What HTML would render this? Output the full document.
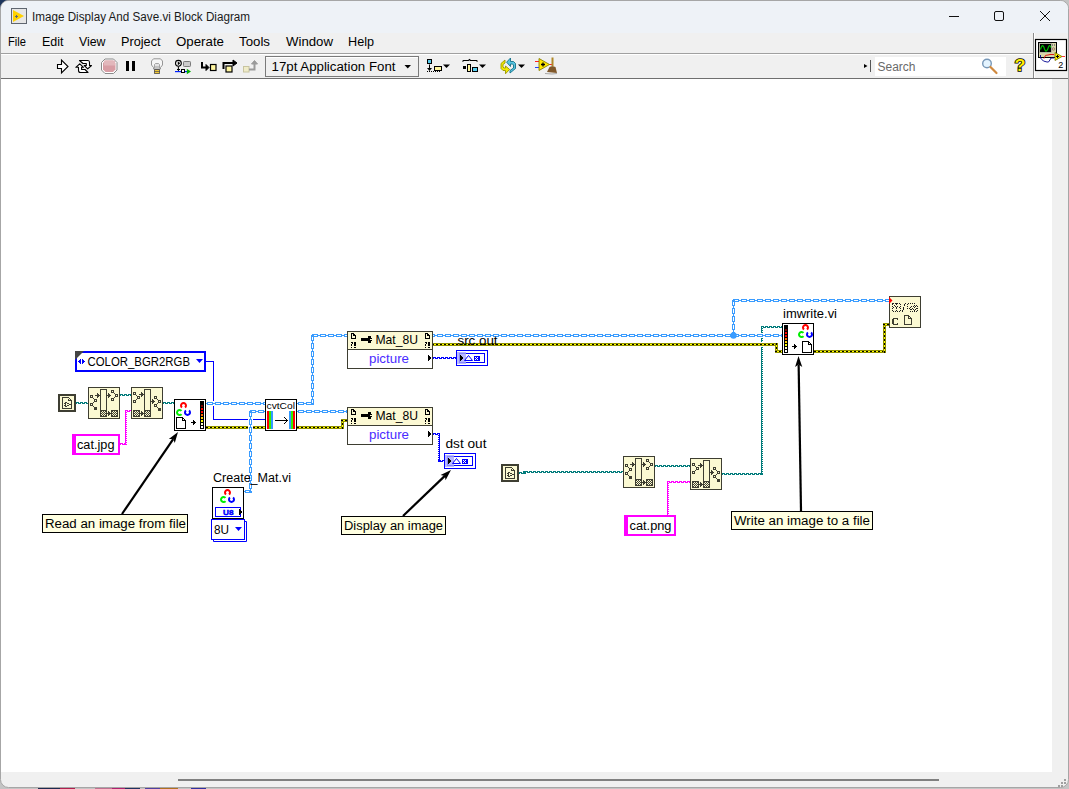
<!DOCTYPE html>
<html><head><meta charset="utf-8"><style>
html,body{margin:0;padding:0;width:1069px;height:789px;overflow:hidden;background:#c4c4c4}
svg{display:block;position:absolute;left:0;top:0}
text{font-family:"Liberation Sans",sans-serif}
</style></head><body>
<svg width="1069" height="789" viewBox="0 0 1069 789">
<defs>
<pattern id="chH" width="8" height="3" patternUnits="userSpaceOnUse"><path d="M1,0h6v1h-6zM1,2h6v1h-6zM0,1h2v1h-2zM6,1h2v1h-2z" fill="#3a9cff"/></pattern>
<pattern id="chV" width="3" height="8" patternUnits="userSpaceOnUse"><path d="M0,1v6h1v-6zM2,1v6h1v-6zM1,0v2h1v-2zM1,6v2h1v-2z" fill="#3a9cff"/></pattern>
<pattern id="erH" width="4" height="3" patternUnits="userSpaceOnUse"><rect width="4" height="3" fill="#8f8f00"/><rect x="0" y="1" width="2" height="1" fill="#000"/><rect x="2" y="1" width="2" height="1" fill="#ffff00"/></pattern>
<pattern id="erV" width="3" height="4" patternUnits="userSpaceOnUse"><rect width="3" height="4" fill="#8f8f00"/><rect y="0" x="1" height="2" width="1" fill="#000"/><rect y="2" x="1" height="2" width="1" fill="#ffff00"/></pattern>
<pattern id="tlH" width="4" height="2" patternUnits="userSpaceOnUse"><path d="M0,0h3v1h-3zM2,1h2v1h-2zM0,1h1v1h-1z" fill="#007b7b"/></pattern>
<pattern id="tlVL" width="2" height="2" patternUnits="userSpaceOnUse"><path d="M0,0h1v2h-1zM1,0h1v1h-1z" fill="#007b7b"/></pattern>
<pattern id="tlVR" width="2" height="2" patternUnits="userSpaceOnUse"><path d="M1,0h1v2h-1zM0,0h1v1h-1z" fill="#007b7b"/></pattern>
<pattern id="pkH" width="4" height="2" patternUnits="userSpaceOnUse"><path d="M0,0h3v1h-3zM2,1h2v1h-2zM0,1h1v1h-1z" fill="#ff00ff"/></pattern>
<pattern id="pkVL" width="2" height="2" patternUnits="userSpaceOnUse"><path d="M0,0h1v2h-1zM1,0h1v1h-1z" fill="#ff00ff"/></pattern>
<pattern id="pkVR" width="2" height="2" patternUnits="userSpaceOnUse"><path d="M1,0h1v2h-1zM0,0h1v1h-1z" fill="#ff00ff"/></pattern>
<pattern id="blH" width="4" height="2" patternUnits="userSpaceOnUse"><path d="M0,0h3v1h-3zM2,1h2v1h-2zM0,1h1v1h-1z" fill="#0000ff"/></pattern>
<pattern id="blVL" width="2" height="2" patternUnits="userSpaceOnUse"><path d="M0,0h1v2h-1zM1,0h1v1h-1z" fill="#0000ff"/></pattern>
<pattern id="blVR" width="2" height="2" patternUnits="userSpaceOnUse"><path d="M1,0h1v2h-1zM0,0h1v1h-1z" fill="#0000ff"/></pattern>
<symbol id="subvi" viewBox="0 0 32 32" width="32" height="32"><rect width="32" height="32" fill="#fbf9d2"/><path d="M0,0h32v1h-32zM0,1h1v1h-1zM31,1h1v1h-1zM0,2h1v1h-1zM12,2h7v1h-7zM31,2h1v1h-1zM0,3h1v1h-1zM12,3h1v1h-1zM18,3h1v1h-1zM23,3h3v1h-3zM31,3h1v1h-1zM0,4h1v1h-1zM12,4h1v1h-1zM18,4h1v1h-1zM23,4h1v1h-1zM25,4h1v1h-1zM31,4h1v1h-1zM0,5h1v1h-1zM12,5h1v1h-1zM18,5h1v1h-1zM23,5h3v1h-3zM31,5h1v1h-1zM0,6h1v1h-1zM9,6h1v1h-1zM12,6h1v1h-1zM18,6h1v1h-1zM20,6h1v1h-1zM26,6h1v1h-1zM31,6h1v1h-1zM0,7h1v1h-1zM9,7h2v1h-2zM12,7h1v1h-1zM18,7h1v1h-1zM20,7h2v1h-2zM27,7h3v1h-3zM31,7h1v1h-1zM0,8h1v1h-1zM2,8h3v1h-3zM7,8h6v1h-6zM18,8h5v1h-5zM27,8h1v1h-1zM29,8h1v1h-1zM31,8h1v1h-1zM0,9h1v1h-1zM2,9h1v1h-1zM4,9h1v1h-1zM9,9h2v1h-2zM12,9h1v1h-1zM18,9h1v1h-1zM20,9h2v1h-2zM27,9h3v1h-3zM31,9h1v1h-1zM0,10h1v1h-1zM2,10h3v1h-3zM9,10h1v1h-1zM12,10h1v1h-1zM18,10h1v1h-1zM20,10h1v1h-1zM26,10h1v1h-1zM31,10h1v1h-1zM0,11h1v1h-1zM5,11h1v1h-1zM12,11h1v1h-1zM18,11h1v1h-1zM23,11h3v1h-3zM31,11h1v1h-1zM0,12h1v1h-1zM6,12h3v1h-3zM12,12h1v1h-1zM18,12h1v1h-1zM23,12h1v1h-1zM25,12h1v1h-1zM31,12h1v1h-1zM0,13h1v1h-1zM6,13h1v1h-1zM8,13h1v1h-1zM12,13h1v1h-1zM18,13h1v1h-1zM23,13h3v1h-3zM31,13h1v1h-1zM0,14h1v1h-1zM6,14h3v1h-3zM12,14h1v1h-1zM18,14h1v1h-1zM31,14h1v1h-1zM0,15h1v1h-1zM5,15h1v1h-1zM12,15h1v1h-1zM18,15h1v1h-1zM31,15h1v1h-1zM0,16h1v1h-1zM2,16h3v1h-3zM12,16h1v1h-1zM18,16h1v1h-1zM31,16h1v1h-1zM0,17h1v1h-1zM2,17h1v1h-1zM4,17h1v1h-1zM12,17h1v1h-1zM18,17h1v1h-1zM31,17h1v1h-1zM0,18h1v1h-1zM2,18h3v1h-3zM12,18h1v1h-1zM18,18h1v1h-1zM31,18h1v1h-1zM0,19h1v1h-1zM5,19h1v1h-1zM12,19h1v1h-1zM18,19h1v1h-1zM31,19h1v1h-1zM0,20h1v1h-1zM6,20h3v1h-3zM12,20h1v1h-1zM18,20h1v1h-1zM31,20h1v1h-1zM0,21h1v1h-1zM6,21h3v1h-3zM12,21h1v1h-1zM18,21h1v1h-1zM31,21h1v1h-1zM0,22h1v1h-1zM6,22h3v1h-3zM12,22h1v1h-1zM18,22h1v1h-1zM31,22h1v1h-1zM0,23h1v1h-1zM12,23h7v1h-7zM23,23h7v1h-7zM31,23h1v1h-1zM0,24h1v1h-1zM12,24h2v1h-2zM15,24h1v1h-1zM17,24h2v1h-2zM20,24h1v1h-1zM23,24h2v1h-2zM26,24h1v1h-1zM28,24h2v1h-2zM31,24h1v1h-1zM0,25h1v1h-1zM12,25h1v1h-1zM14,25h1v1h-1zM16,25h1v1h-1zM18,25h1v1h-1zM20,25h2v1h-2zM23,25h1v1h-1zM25,25h1v1h-1zM27,25h1v1h-1zM29,25h1v1h-1zM31,25h1v1h-1zM0,26h1v1h-1zM12,26h2v1h-2zM15,26h1v1h-1zM17,26h8v1h-8zM26,26h1v1h-1zM28,26h2v1h-2zM31,26h1v1h-1zM0,27h1v1h-1zM12,27h1v1h-1zM14,27h1v1h-1zM16,27h1v1h-1zM18,27h1v1h-1zM20,27h2v1h-2zM23,27h1v1h-1zM25,27h1v1h-1zM27,27h1v1h-1zM29,27h1v1h-1zM31,27h1v1h-1zM0,28h1v1h-1zM12,28h2v1h-2zM15,28h1v1h-1zM17,28h2v1h-2zM20,28h1v1h-1zM23,28h2v1h-2zM26,28h1v1h-1zM28,28h2v1h-2zM31,28h1v1h-1zM0,29h1v1h-1zM12,29h7v1h-7zM23,29h7v1h-7zM31,29h1v1h-1zM0,30h1v1h-1zM31,30h1v1h-1zM0,31h32v1h-32z" fill="#3e3e32"/></symbol>
<symbol id="subviB" viewBox="0 0 32 32" width="32" height="32"><rect width="32" height="32" fill="#fbf9d2"/><path d="M0,0h32v1h-32zM0,1h1v1h-1zM31,1h1v1h-1zM0,2h1v1h-1zM13,2h7v1h-7zM31,2h1v1h-1zM0,3h1v1h-1zM13,3h1v1h-1zM19,3h1v1h-1zM31,3h1v1h-1zM0,4h1v1h-1zM13,4h1v1h-1zM19,4h1v1h-1zM31,4h1v1h-1zM0,5h1v1h-1zM2,5h3v1h-3zM10,5h1v1h-1zM13,5h1v1h-1zM19,5h1v1h-1zM31,5h1v1h-1zM0,6h1v1h-1zM2,6h1v1h-1zM4,6h1v1h-1zM10,6h2v1h-2zM13,6h1v1h-1zM19,6h1v1h-1zM31,6h1v1h-1zM0,7h1v1h-1zM2,7h3v1h-3zM8,7h6v1h-6zM19,7h1v1h-1zM31,7h1v1h-1zM0,8h1v1h-1zM5,8h1v1h-1zM10,8h2v1h-2zM13,8h1v1h-1zM19,8h1v1h-1zM31,8h1v1h-1zM0,9h1v1h-1zM6,9h3v1h-3zM10,9h1v1h-1zM13,9h1v1h-1zM19,9h1v1h-1zM23,9h3v1h-3zM31,9h1v1h-1zM0,10h1v1h-1zM6,10h1v1h-1zM8,10h1v1h-1zM13,10h1v1h-1zM19,10h1v1h-1zM23,10h1v1h-1zM25,10h1v1h-1zM31,10h1v1h-1zM0,11h1v1h-1zM6,11h3v1h-3zM13,11h1v1h-1zM19,11h1v1h-1zM23,11h3v1h-3zM31,11h1v1h-1zM0,12h1v1h-1zM5,12h1v1h-1zM13,12h1v1h-1zM19,12h1v1h-1zM21,12h1v1h-1zM26,12h1v1h-1zM31,12h1v1h-1zM0,13h1v1h-1zM2,13h3v1h-3zM13,13h1v1h-1zM19,13h1v1h-1zM21,13h2v1h-2zM27,13h3v1h-3zM31,13h1v1h-1zM0,14h1v1h-1zM2,14h1v1h-1zM4,14h1v1h-1zM13,14h1v1h-1zM19,14h5v1h-5zM27,14h1v1h-1zM29,14h1v1h-1zM31,14h1v1h-1zM0,15h1v1h-1zM2,15h3v1h-3zM13,15h1v1h-1zM19,15h1v1h-1zM21,15h2v1h-2zM27,15h3v1h-3zM31,15h1v1h-1zM0,16h1v1h-1zM13,16h1v1h-1zM19,16h1v1h-1zM21,16h1v1h-1zM26,16h1v1h-1zM31,16h1v1h-1zM0,17h1v1h-1zM13,17h1v1h-1zM19,17h1v1h-1zM23,17h3v1h-3zM31,17h1v1h-1zM0,18h1v1h-1zM13,18h1v1h-1zM19,18h1v1h-1zM23,18h1v1h-1zM25,18h1v1h-1zM31,18h1v1h-1zM0,19h1v1h-1zM13,19h1v1h-1zM19,19h1v1h-1zM23,19h3v1h-3zM31,19h1v1h-1zM0,20h1v1h-1zM13,20h1v1h-1zM19,20h1v1h-1zM26,20h1v1h-1zM31,20h1v1h-1zM0,21h1v1h-1zM13,21h1v1h-1zM19,21h1v1h-1zM27,21h3v1h-3zM31,21h1v1h-1zM0,22h1v1h-1zM13,22h1v1h-1zM19,22h1v1h-1zM27,22h3v1h-3zM31,22h1v1h-1zM0,23h1v1h-1zM2,23h7v1h-7zM13,23h7v1h-7zM27,23h3v1h-3zM31,23h1v1h-1zM0,24h1v1h-1zM2,24h2v1h-2zM5,24h1v1h-1zM7,24h2v1h-2zM10,24h1v1h-1zM13,24h2v1h-2zM16,24h1v1h-1zM18,24h2v1h-2zM31,24h1v1h-1zM0,25h1v1h-1zM2,25h1v1h-1zM4,25h1v1h-1zM6,25h1v1h-1zM8,25h1v1h-1zM10,25h2v1h-2zM13,25h1v1h-1zM15,25h1v1h-1zM17,25h1v1h-1zM19,25h1v1h-1zM31,25h1v1h-1zM0,26h1v1h-1zM2,26h2v1h-2zM5,26h1v1h-1zM7,26h8v1h-8zM16,26h1v1h-1zM18,26h2v1h-2zM31,26h1v1h-1zM0,27h1v1h-1zM2,27h1v1h-1zM4,27h1v1h-1zM6,27h1v1h-1zM8,27h1v1h-1zM10,27h2v1h-2zM13,27h1v1h-1zM15,27h1v1h-1zM17,27h1v1h-1zM19,27h1v1h-1zM31,27h1v1h-1zM0,28h1v1h-1zM2,28h2v1h-2zM5,28h1v1h-1zM7,28h2v1h-2zM10,28h1v1h-1zM13,28h2v1h-2zM16,28h1v1h-1zM18,28h2v1h-2zM31,28h1v1h-1zM0,29h1v1h-1zM2,29h7v1h-7zM13,29h7v1h-7zM31,29h1v1h-1zM0,30h1v1h-1zM31,30h1v1h-1zM0,31h32v1h-32z" fill="#3e3e32"/></symbol>
<symbol id="pathconst" viewBox="0 0 18 18" width="18" height="18"><rect width="18" height="18" fill="#fbf9d2"/><path d="M0,0h18v1h-18zM0,1h18v1h-18zM0,2h2v1h-2zM16,2h2v1h-2zM0,3h2v1h-2zM4,3h7v1h-7zM16,3h2v1h-2zM0,4h2v1h-2zM4,4h1v1h-1zM11,4h1v1h-1zM16,4h2v1h-2zM0,5h2v1h-2zM4,5h1v1h-1zM10,5h1v1h-1zM12,5h1v1h-1zM16,5h2v1h-2zM0,6h2v1h-2zM4,6h1v1h-1zM10,6h4v1h-4zM16,6h2v1h-2zM0,7h2v1h-2zM4,7h1v1h-1zM13,7h1v1h-1zM16,7h2v1h-2zM0,8h2v1h-2zM4,8h1v1h-1zM7,8h2v1h-2zM13,8h1v1h-1zM16,8h2v1h-2zM0,9h2v1h-2zM4,9h1v1h-1zM6,9h2v1h-2zM9,9h2v1h-2zM13,9h1v1h-1zM16,9h2v1h-2zM0,10h2v1h-2zM4,10h1v1h-1zM7,10h1v1h-1zM11,10h3v1h-3zM16,10h2v1h-2zM0,11h2v1h-2zM4,11h1v1h-1zM6,11h2v1h-2zM9,11h2v1h-2zM13,11h1v1h-1zM16,11h2v1h-2zM0,12h2v1h-2zM4,12h1v1h-1zM7,12h2v1h-2zM13,12h1v1h-1zM16,12h2v1h-2zM0,13h2v1h-2zM4,13h1v1h-1zM13,13h1v1h-1zM16,13h2v1h-2zM0,14h2v1h-2zM4,14h10v1h-10zM16,14h2v1h-2zM0,15h2v1h-2zM16,15h2v1h-2zM0,16h18v1h-18zM0,17h18v1h-18z" fill="#3e3e32"/></symbol>
<symbol id="imread" viewBox="0 0 32 32" width="32" height="32"><rect width="32" height="32" fill="#000"/><rect x="1" y="1" width="30" height="30" fill="#fff"/><path d="M7.96,8.47 A2.5,2.5 0 1 1 11.04,8.47" fill="none" stroke="#ff0000" stroke-width="2"/><path d="M7.47,15.04 A2.5,2.5 0 1 1 7.47,11.96" fill="none" stroke="#00ee00" stroke-width="2"/><path d="M15.04,11.53 A2.5,2.5 0 1 1 11.96,11.53" fill="none" stroke="#0000ff" stroke-width="2"/><path d="M2,18h7v1h-7zM2,19h1v1h-1zM8,19h2v1h-2zM2,20h1v1h-1zM8,20h1v1h-1zM10,20h1v1h-1zM2,21h1v1h-1zM8,21h4v1h-4zM2,22h1v1h-1zM11,22h1v1h-1zM2,23h1v1h-1zM11,23h1v1h-1zM2,24h1v1h-1zM11,24h1v1h-1zM2,25h1v1h-1zM11,25h1v1h-1zM2,26h1v1h-1zM11,26h1v1h-1zM2,27h1v1h-1zM11,27h1v1h-1zM2,28h1v1h-1zM11,28h1v1h-1zM2,29h10v1h-10z" fill="#000"/><path d="M19,21h1v1h-1zM19,22h2v1h-2zM17,23h5v1h-5zM19,24h2v1h-2zM19,25h1v1h-1z" fill="#000"/><rect x="26" y="2" width="4" height="28" fill="#000"/><rect x="27" y="6" width="2" height="2" fill="#7a0000"/><rect x="27" y="9" width="2" height="2" fill="#ff0000"/><rect x="27" y="12" width="2" height="2" fill="#ff0000"/><rect x="27" y="15" width="2" height="2" fill="#ff6a00"/><rect x="27" y="18" width="2" height="2" fill="#ffd000"/><rect x="27" y="21" width="2" height="2" fill="#ffff00"/><rect x="27" y="24" width="2" height="2" fill="#ffffc8"/><rect x="27" y="27" width="2" height="2" fill="#ffffff"/></symbol>
<symbol id="imwrite" viewBox="0 0 32 32" width="32" height="32"><rect width="32" height="32" fill="#000"/><rect x="1" y="1" width="30" height="30" fill="#fff"/><path d="M21.96,6.47 A2.5,2.5 0 1 1 25.04,6.47" fill="none" stroke="#ff0000" stroke-width="2"/><path d="M21.47,13.04 A2.5,2.5 0 1 1 21.47,9.96" fill="none" stroke="#00ee00" stroke-width="2"/><path d="M29.04,9.53 A2.5,2.5 0 1 1 25.96,9.53" fill="none" stroke="#0000ff" stroke-width="2"/><path d="M20,18h7v1h-7zM20,19h1v1h-1zM26,19h2v1h-2zM20,20h1v1h-1zM26,20h1v1h-1zM28,20h1v1h-1zM20,21h1v1h-1zM26,21h4v1h-4zM20,22h1v1h-1zM29,22h1v1h-1zM20,23h1v1h-1zM29,23h1v1h-1zM20,24h1v1h-1zM29,24h1v1h-1zM20,25h1v1h-1zM29,25h1v1h-1zM20,26h1v1h-1zM29,26h1v1h-1zM20,27h1v1h-1zM29,27h1v1h-1zM20,28h1v1h-1zM29,28h1v1h-1zM20,29h10v1h-10z" fill="#000"/><path d="M12,21h1v1h-1zM12,22h2v1h-2zM10,23h5v1h-5zM12,24h2v1h-2zM12,25h1v1h-1z" fill="#000"/><rect x="2" y="2" width="4" height="28" fill="#000"/><rect x="3" y="6" width="2" height="2" fill="#7a0000"/><rect x="3" y="9" width="2" height="2" fill="#ff0000"/><rect x="3" y="12" width="2" height="2" fill="#ff0000"/><rect x="3" y="15" width="2" height="2" fill="#ff6a00"/><rect x="3" y="18" width="2" height="2" fill="#ffd000"/><rect x="3" y="21" width="2" height="2" fill="#ffff00"/><rect x="3" y="24" width="2" height="2" fill="#ffffc8"/><rect x="3" y="27" width="2" height="2" fill="#ffffff"/></symbol>
<symbol id="cvtcolor" viewBox="0 0 32 32" width="32" height="32"><rect width="32" height="32" fill="#000"/><rect x="1" y="1" width="30" height="30" fill="#fff"/><text x="1.5" y="9.6" font-family="Liberation Mono" font-size="9" fill="#000" textLength="28.5" lengthAdjust="spacingAndGlyphs">cvtCol</text><rect x="2" y="12" width="2" height="18" fill="#ff0000"/><rect x="4" y="12" width="2" height="18" fill="#33ee00"/><rect x="6" y="12" width="2" height="18" fill="#3399ff"/><rect x="24" y="12" width="2" height="18" fill="#3399ff"/><rect x="26" y="12" width="2" height="18" fill="#33ee00"/><rect x="28" y="12" width="2" height="18" fill="#ff0000"/><path d="M10,21h12v1h-12zM19,18h1v1h-1zM20,19h1v1h-1zM21,20h1v1h-1zM22,21h1v1h-1zM21,22h1v1h-1zM20,23h1v1h-1zM19,24h1v1h-1z" fill="#000"/></symbol>
<symbol id="createmat" viewBox="0 0 32 32" width="32" height="32"><rect width="32" height="32" fill="#000"/><rect x="1" y="1" width="30" height="30" fill="#fff"/><path d="M13.96,7.47 A2.5,2.5 0 1 1 17.04,7.47" fill="none" stroke="#ff0000" stroke-width="2"/><path d="M13.47,14.04 A2.5,2.5 0 1 1 13.47,10.96" fill="none" stroke="#00ee00" stroke-width="2"/><path d="M21.04,10.53 A2.5,2.5 0 1 1 17.96,10.53" fill="none" stroke="#0000ff" stroke-width="2"/><rect x="3.5" y="20.5" width="25" height="9" fill="#fff" stroke="#0000ff"/><text x="11" y="28" font-family="Liberation Sans" font-weight="bold" font-size="8" fill="#0000ff" stroke="#0000ff" stroke-width="0.5" textLength="10.5" lengthAdjust="spacingAndGlyphs">U8</text><path d="M27,22h1v1h1v1h1v2h-1v1h-1v1h-1z" fill="#000"/></symbol>
<symbol id="errh" viewBox="0 0 32 32" width="32" height="32"><rect width="32" height="32" fill="#3e3e32"/><rect x="1" y="1" width="30" height="30" fill="#fbf9d2"/><path d="M3,7h2v1h-2zM6,7h3v1h-3zM10,7h1v1h-1zM16,7h1v1h-1zM19,7h1v1h-1zM21,7h1v1h-1zM23,7h1v1h-1zM25,7h1v1h-1zM3,8h1v1h-1zM7,8h1v1h-1zM11,8h1v1h-1zM15,8h1v1h-1zM18,8h1v1h-1zM5,9h1v1h-1zM15,9h1v1h-1zM25,9h1v1h-1zM27,9h1v1h-1zM3,10h1v1h-1zM6,10h1v1h-1zM8,10h1v1h-1zM11,10h1v1h-1zM18,10h1v1h-1zM22,10h1v1h-1zM24,10h1v1h-1zM26,10h1v1h-1zM28,10h1v1h-1zM4,11h1v1h-1zM7,11h1v1h-1zM10,11h1v1h-1zM14,11h1v1h-1zM21,11h1v1h-1zM25,11h1v1h-1zM3,12h1v1h-1zM7,12h1v1h-1zM11,12h1v1h-1zM14,12h1v1h-1zM18,12h1v1h-1zM20,12h1v1h-1zM23,12h1v1h-1zM27,12h2v1h-2zM14,13h1v1h-1zM21,13h2v1h-2zM24,13h1v1h-1zM26,13h1v1h-1zM3,14h1v1h-1zM7,14h1v1h-1zM11,14h1v1h-1zM13,14h1v1h-1zM25,14h1v1h-1zM28,14h1v1h-1zM4,15h1v1h-1zM6,15h1v1h-1zM8,15h1v1h-1zM10,15h1v1h-1zM13,15h1v1h-1zM21,15h1v1h-1zM23,15h1v1h-1zM25,15h1v1h-1zM27,15h1v1h-1z" fill="#202020"/><path d="M4,22h5v1h-5zM3,23h2v1h-2zM8,23h1v1h-1zM3,24h2v1h-2zM3,25h2v1h-2zM3,26h2v1h-2zM3,27h2v1h-2zM8,27h1v1h-1zM4,28h5v1h-5z" fill="#3e3e32"/><path d="M15,19h5v1h-5zM15,20h1v1h-1zM19,20h2v1h-2zM15,21h1v1h-1zM19,21h1v1h-1zM21,21h1v1h-1zM15,22h1v1h-1zM19,22h4v1h-4zM15,23h1v1h-1zM22,23h1v1h-1zM15,24h1v1h-1zM22,24h1v1h-1zM15,25h1v1h-1zM22,25h1v1h-1zM15,26h1v1h-1zM22,26h1v1h-1zM15,27h1v1h-1zM22,27h1v1h-1zM15,28h8v1h-8z" fill="#3e3e32"/></symbol>
<symbol id="propnode" viewBox="0 0 86 38" width="86" height="38">
<rect width="86" height="38" fill="#3e3e32"/><rect x="1" y="1" width="84" height="17" fill="#fcf9d4"/><rect x="1" y="19" width="84" height="18" fill="#fff"/>
<path d="M4,2h3v1h-3zM4,3h1v1h-1zM6,3h2v1h-2zM4,4h1v1h-1zM6,4h3v1h-3zM4,5h1v1h-1zM8,5h1v1h-1zM4,6h1v1h-1zM8,6h1v1h-1zM4,7h5v1h-5zM4,11h2v1h-2zM7,11h2v1h-2zM5,12h1v1h-1zM7,12h2v1h-2zM4,13h1v1h-1zM7,13h2v1h-2zM4,14h1v1h-1zM7,14h2v1h-2zM4,16h1v1h-1zM7,16h2v1h-2z" fill="#000"/><path d="M78,2h3v1h-3zM78,3h1v1h-1zM80,3h2v1h-2zM78,4h1v1h-1zM80,4h3v1h-3zM78,5h1v1h-1zM82,5h1v1h-1zM78,6h1v1h-1zM82,6h1v1h-1zM78,7h5v1h-5zM78,11h2v1h-2zM81,11h2v1h-2zM79,12h1v1h-1zM81,12h2v1h-2zM78,13h1v1h-1zM81,13h2v1h-2zM78,14h1v1h-1zM81,14h2v1h-2zM78,16h1v1h-1zM81,16h2v1h-2z" fill="#000"/><path d="M21,5h3v1h-3zM21,6h3v1h-3zM14,7h8v1h-8zM24,7h1v1h-1zM14,8h8v1h-8zM14,9h8v1h-8zM24,9h1v1h-1zM21,10h3v1h-3zM21,11h3v1h-3z" fill="#000"/>
<path d="M22,7h2v1h-1v1h1v1h-2z" fill="#000"/>
<path d="M81,24h1v1h1v1h1v2h-1v1h-1v1h-1z" fill="#000"/>
<text x="28.5" y="13.2" font-size="12.6" fill="#000" textLength="42.5" lengthAdjust="spacingAndGlyphs">Mat_8U</text>
<text x="22" y="31.5" font-size="12.6" fill="#4a2cff" textLength="40" lengthAdjust="spacingAndGlyphs">picture</text>
</symbol>
<symbol id="picind" viewBox="0 0 32 16" width="32" height="16">
<rect x="0.5" y="0.5" width="31" height="15" fill="#fff" stroke="#0000ff"/>
<rect x="3.5" y="3.5" width="25" height="9" fill="none" stroke="#0000ff"/>
<rect x="1" y="2" width="9" height="12" fill="#a8a8ff" opacity="0.8"/>
<path d="M4,5h1v1h1v1h1v2h-1v1h-1v1h-1z" fill="#000"/>
<path d="M8.5,10.5 L12.5,5.5 L16.5,10.5 Z" fill="none" stroke="#0000ff"/>
<rect x="18" y="6" width="6" height="5" fill="#0000ff"/>
<path d="M19,7h1v1h-1zM21,7h1v1h-1zM20,8h1v1h-1zM19,9h1v1h-1zM21,9h1v1h-1z" fill="#fff"/>
</symbol>
</defs>
<defs></defs>
<rect x="0" y="0" width="1069" height="789" fill="#c4c4c4"/>
<rect x="0" y="0" width="191" height="4" fill="#1d355c"/>
<rect x="0" y="0" width="4" height="40" fill="#1d355c"/>
<rect x="209" y="0" width="15" height="2" fill="#d9a520"/>
<rect x="38" y="786" width="22" height="3" fill="#1d2a50"/><rect x="60" y="786" width="15" height="3" fill="#b02050"/><rect x="95" y="786" width="17" height="3" fill="#c07090"/><rect x="112" y="786" width="13" height="3" fill="#b02070"/><rect x="125" y="786" width="15" height="3" fill="#203060"/><rect x="145" y="786" width="15" height="3" fill="#5040a0"/><rect x="160" y="786" width="18" height="3" fill="#b07020"/><rect x="191" y="786" width="15" height="3" fill="#3030a0"/>
<rect x="0.5" y="0.5" width="1068" height="787" rx="8" fill="#f0f0f0" stroke="#a6a6a6"/>
<path d="M1,33 V9 A8,8 0 0 1 9,1 H1060 A8,8 0 0 1 1068,9 V33 Z" fill="#eef2f7"/>
<rect x="1" y="53" width="1032" height="1" fill="#a0a0a0"/>
<rect x="1" y="54" width="1032" height="1" fill="#ffffff"/>
<rect x="1" y="78" width="1067" height="1" fill="#6f6f6f"/>
<rect x="1033" y="33" width="1" height="45" fill="#8a8a8a"/><rect x="1034" y="33" width="1" height="45" fill="#ffffff"/>
<rect x="1" y="79" width="1051" height="693" fill="#ffffff"/>
<rect x="178" y="779" width="761" height="2" fill="#808080"/>
<text x="32" y="21" font-size="12.5" fill="#1a1a1a" textLength="218" lengthAdjust="spacingAndGlyphs">Image Display And Save.vi Block Diagram</text>
<g font-size="12.5" fill="#000">
<text x="8" y="46" textLength="18" lengthAdjust="spacingAndGlyphs">File</text>
<text x="42" y="46" textLength="21.5" lengthAdjust="spacingAndGlyphs">Edit</text>
<text x="79" y="46" textLength="26.5" lengthAdjust="spacingAndGlyphs">View</text>
<text x="121" y="46" textLength="39.5" lengthAdjust="spacingAndGlyphs">Project</text>
<text x="176" y="46" textLength="48" lengthAdjust="spacingAndGlyphs">Operate</text>
<text x="239" y="46" textLength="31" lengthAdjust="spacingAndGlyphs">Tools</text>
<text x="286" y="46" textLength="47" lengthAdjust="spacingAndGlyphs">Window</text>
<text x="348" y="46" textLength="26" lengthAdjust="spacingAndGlyphs">Help</text>
</g>
<!-- title icon -->
<rect x="11.5" y="8.5" width="15" height="15" fill="#e6e6e6" stroke="#5f6670"/>
<path d="M13,10 L24,16 L13,22 Z" fill="#ffd200"/>
<path d="M15,16.5 h3 M16.5,15 v3" stroke="#5f6670" stroke-width="1"/>
<!-- window buttons -->
<rect x="949" y="16" width="10" height="1" fill="#111"/>
<rect x="994.5" y="11.5" width="9" height="9" rx="1.5" fill="none" stroke="#111" stroke-width="1"/>
<path d="M1040,11 L1050,21 M1050,11 L1040,21" stroke="#111" stroke-width="1"/>
<!-- toolbar -->
<path d="M57.5,64.5 H61.5 V60 L68,66.5 L61.5,73 V68.5 H57.5 Z" fill="#fff" stroke="#000" stroke-width="1.1"/>
<g fill="#fff" stroke="#000" stroke-width="1.1" stroke-linejoin="round">
<path d="M79.5,60.5 H88 Q89.5,60.5 89.5,62.5 V65.5 H91.5 L87.7,68.8 L84.3,65.5 H86.3 V63.5 H83 Z"/>
<path d="M88,72.5 H80.5 Q78.5,72.5 78.5,70.5 V67.3 H75.8 L79.7,63.8 L83.5,67.3 H81.6 V69.5 H85 Z"/>
</g>
<path d="M105,59 H113.5 L117,62.5 V70 L113.5,73.5 H105 L101.5,70 V62.5 Z" fill="#fff" stroke="#8a8a8a" stroke-width="1"/>
<path d="M105.5,60.5 H113 L115.5,63 V69.5 L113,72 H105.5 L103,69.5 V63 Z" fill="#d89da4"/>
<rect x="104" y="60.5" width="11" height="5" fill="#e2b7bb"/>
<rect x="126" y="61" width="3" height="10" fill="#000"/><rect x="132" y="61" width="3" height="10" fill="#000"/>
<path d="M153.5,69 V67.5 L151.5,65 V61 L153.5,58.8 H160.5 L162.5,61 V65 L160.5,67.5 V69 Z" fill="#f6f6f6" stroke="#8c8c8c" stroke-width="0.9"/>
<path d="M154.5,68.5 V64.5 L155.5,63.5 H158.5 L159.5,64.5 V68.5 M156,66 v2.5 M158,66 v2.5" fill="#e4e4e4" stroke="#909090" stroke-width="0.8"/>
<rect x="154" y="69" width="6" height="5" rx="0.8" fill="#505058"/>
<rect x="154.8" y="69.9" width="4.4" height="1.3" fill="#f0c838"/>
<rect x="154.8" y="71.9" width="4.4" height="1.3" fill="#f0c838"/>
<!-- retain wire values -->
<circle cx="178.4" cy="63.3" r="2.9" fill="#fff" stroke="#000" stroke-width="1.1"/>
<path d="M178,61.8 L180,63.3 L178,64.8 Z" fill="#000" stroke="#000" stroke-width="0.5"/>
<rect x="183.5" y="61.5" width="7" height="5" rx="0.8" fill="#cccccc" stroke="#7a7a7a"/>
<path d="M178.4,66.5 V71 M177,69.5 h3" stroke="#000" stroke-width="1"/>
<rect x="175" y="71" width="12" height="1.2" fill="#0020ff"/>
<rect x="181.5" y="69.5" width="3" height="3" fill="#fff" stroke="#000" stroke-width="1"/>
<path d="M186.8,68.8 L191,71.5 L186.8,74.2 Z" fill="#00b000"/>
<!-- step into -->
<path d="M202,62 V67.5 H207" fill="none" stroke="#000" stroke-width="2"/>
<path d="M206,64.5 L209,67.5 L206,70.5 Z" fill="#000" stroke="#000"/>
<rect x="210.5" y="64.5" width="5.5" height="6" fill="#fff6a0" stroke="#000" stroke-width="1.2"/>
<!-- step over -->
<path d="M223.5,69 V63 H234" fill="none" stroke="#000" stroke-width="2"/>
<path d="M233,60 L237,63 L233,66 Z" fill="#000" stroke="#000"/>
<rect x="226" y="66" width="6" height="6" fill="#fff6a0" stroke="#000" stroke-width="1.2"/>
<!-- step out disabled -->
<rect x="243.5" y="66.5" width="5.5" height="5.5" fill="#f0ecc8" stroke="#c8c4a0"/>
<path d="M249,69.5 H254.5 V63" fill="none" stroke="#9a9a9a" stroke-width="2"/>
<path d="M251.5,64 L254.5,60.5 L257.5,64 Z" fill="#9a9a9a" stroke="#9a9a9a"/>
<!-- font box -->
<rect x="265.5" y="56.5" width="153" height="20" fill="#f0f0f0" stroke="#7a7a7a"/>
<rect x="266" y="57" width="152" height="1" fill="#fff"/>
<text x="271.5" y="71" font-size="12.5" fill="#000" textLength="124" lengthAdjust="spacingAndGlyphs">17pt Application Font</text>
<path d="M404.5,65 H411 L407.75,68.5 Z" fill="#000"/>
<!-- align -->
<rect x="427.5" y="59.5" width="4" height="4" fill="#55ccee" stroke="#000"/>
<path d="M429.5,64.5 V70" stroke="#000"/><path d="M427,68 L429.5,71 L432,68 Z" fill="#000"/>
<rect x="434.5" y="66.5" width="7" height="4" fill="#fff6a0" stroke="#000"/>
<path d="M427,71.5 h1 M429,71.5 h1 M431,71.5 h1 M433,71.5 h1 M435,71.5 h1 M437,71.5 h1 M439,71.5 h1" stroke="#000"/>
<path d="M443,64.5 H450 L446.5,68 Z" fill="#000"/>
<!-- distribute -->
<path d="M462.5,61.5 L463.5,60.5 H468.5 L469.5,59.5 L470.5,60.5 H476.5 L477.5,61.5" fill="none" stroke="#000" stroke-width="1.1"/>
<rect x="463" y="66" width="3" height="3" fill="#000"/>
<rect x="467.5" y="64.5" width="3" height="7" fill="#fff6a0" stroke="#000"/>
<rect x="472.5" y="67.5" width="5" height="4" fill="#55ccee" stroke="#000"/>
<path d="M479,64.5 H486 L482.5,68 Z" fill="#000"/>
<!-- reorder -->
<path d="M505,60 L501,63.5 V68.5 L503,70.5 H505.5 V73.8 L509.6,69.4 L505.5,66 V68 H504 L503,67 V64.5 L505,63 Z" fill="#f2ea00" stroke="#9a9800" stroke-width="0.9"/>
<path d="M510.5,58 L506.6,62.2 L510.5,66.5 V64 H512.5 L513.5,65 V68 L510,70.5 V73 L515.5,68.5 V63.5 L513.5,61.5 H510.5 Z" fill="#58c4e0" stroke="#137088" stroke-width="0.9"/>
<path d="M518,64.5 H525 L521.5,68 Z" fill="#000"/>
<!-- cleanup -->
<path d="M535,61.5 h4 M549,64.5 h4" stroke="#ff2020" stroke-width="1"/>
<path d="M535,67.5 h4" stroke="#2040ff" stroke-width="1"/>
<path d="M539,58.5 L539,70.5 L549.5,64.5 Z" fill="#ffe800" stroke="#8a8000" stroke-width="0.9"/>
<path d="M541,64.5 h4 M543,62.5 v4" stroke="#000" stroke-width="1.3"/>
<rect x="551.5" y="57.5" width="2" height="9" fill="#b08828"/>
<path d="M547,72 L549.5,67 Q552,65.5 555.5,67 L557,73 Z" fill="#80582a"/>
<path d="M545,73.5 L552,74 L557,73.5" fill="none" stroke="#a8a8a8" stroke-width="1.2"/>
<!-- search -->
<path d="M864,64 L867.5,66 L864,68 Z" fill="#000"/>
<rect x="870" y="60" width="1" height="12" fill="#555"/>
<rect x="875" y="57" width="131" height="19" fill="#fff"/>
<text x="877.5" y="71" font-size="12.5" fill="#6a6a6a" textLength="38" lengthAdjust="spacingAndGlyphs">Search</text>
<circle cx="987" cy="63.5" r="4.3" fill="#e4f4ff" stroke="#7898b8" stroke-width="1.4"/>
<path d="M990.5,67 L996.5,73" stroke="#d08a40" stroke-width="2.2" stroke-linecap="round"/>
<text x="1014.5" y="71" font-size="16.5" font-weight="bold" fill="#ffee00" stroke="#000" stroke-width="1.5" paint-order="stroke" textLength="11" lengthAdjust="spacingAndGlyphs">?</text>
<!-- VI icon -->
<rect x="1035.5" y="39.5" width="31" height="31" fill="#fff" stroke="#000" stroke-width="1.2"/>
<rect x="1038" y="42" width="19" height="16" fill="#000"/>
<rect x="1039" y="43" width="17" height="14" fill="#d8d4a8"/>
<rect x="1040" y="44" width="11" height="8" fill="#000"/>
<rect x="1039.5" y="43.5" width="12" height="9" fill="none" stroke="#a0a0a0" stroke-width="0.6"/>
<path d="M1040.5,49.5 Q1042.5,42 1044.5,49 Q1046.5,54 1048.5,47 Q1049.5,44 1051,47.5" stroke="#00c000" fill="none" stroke-width="1.1"/>
<path d="M1052.5,44 v2 M1054.5,44 v2" stroke="#707070" stroke-width="0.8"/>
<circle cx="1053.5" cy="49" r="1.3" fill="#f0c090" stroke="#606060" stroke-width="0.6"/>
<path d="M1040.5,55 V58 Q1043,62 1047,62 H1048.5 Q1050,60 1051,58 H1054" stroke="#000090" fill="none" stroke-width="0.9"/>
<path d="M1044,58.5 Q1045,54 1048,55 L1050,54.5 H1054" stroke="#e00000" fill="none" stroke-width="0.9"/>
<path d="M1055,52.5 L1062,56.5 L1055,60.5 Z" fill="#ffee00" stroke="#707000" stroke-width="0.8"/>
<path d="M1056,56.5 h3 M1057.5,55 v3" stroke="#000" stroke-width="1"/>
<path d="M1062,56.5 h3" stroke="#ff2020" stroke-width="0.9"/>
<text x="1058.3" y="68.2" font-size="9.5" fill="#000" textLength="5" lengthAdjust="spacingAndGlyphs">2</text>
<!-- grip -->
<g fill="#a0a0a0"><rect x="1064" y="779" width="2" height="2"/><rect x="1061" y="782" width="2" height="2"/><rect x="1064" y="782" width="2" height="2"/><rect x="1058" y="785" width="2" height="2"/><rect x="1061" y="785" width="2" height="2"/></g>

<g transform="translate(76,402)"><rect width="12" height="2" fill="url(#tlH)"/></g>
<g transform="translate(120,394)"><rect width="11" height="2" fill="url(#tlH)"/></g>
<g transform="translate(163,402)"><rect width="11" height="2" fill="url(#tlH)"/></g>
<g transform="translate(120,443)"><rect width="6" height="2" fill="url(#pkH)"/></g>
<g transform="translate(125,410)"><rect width="2" height="35" fill="url(#pkVL)"/></g>
<g transform="translate(125,410)"><rect width="6" height="2" fill="url(#pkH)"/></g>
<rect x="206" y="361" width="8" height="1" fill="#0000ff"/>
<rect x="213" y="361" width="1" height="40" fill="#0000ff"/>
<rect x="213" y="406" width="1" height="14" fill="#0000ff"/>
<rect x="213" y="419" width="35" height="1" fill="#0000ff"/>
<rect x="253" y="419" width="12" height="1" fill="#0000ff"/>
<g transform="translate(206,426)"><rect x="0" width="42" height="3" fill="url(#erH)"/></g>
<g transform="translate(253,426)"><rect x="0" width="12" height="3" fill="url(#erH)"/></g>
<g transform="translate(297,426)"><rect x="0" width="47" height="3" fill="url(#erH)"/></g>
<g transform="translate(341,419)"><rect width="3" height="10" fill="url(#erV)"/></g>
<g transform="translate(341,419)"><rect x="0" width="6" height="3" fill="url(#erH)"/></g>
<g transform="translate(432,343)"><rect x="1" width="345" height="3" fill="url(#erH)"/></g>
<g transform="translate(775,343)"><rect width="3" height="10" fill="url(#erV)"/></g>
<g transform="translate(775,350)"><rect x="0" width="7" height="3" fill="url(#erH)"/></g>
<g transform="translate(814,350)"><rect x="0" width="72" height="3" fill="url(#erH)"/></g>
<g transform="translate(883,323)"><rect width="3" height="30" fill="url(#erV)"/></g>
<g transform="translate(883,323)"><rect x="0" width="6" height="3" fill="url(#erH)"/></g>
<g transform="translate(206,402)"><rect x="0" width="59" height="3" fill="url(#chH)"/></g>
<g transform="translate(297,402)"><rect x="0" width="17" height="3" fill="url(#chH)"/></g>
<g transform="translate(311,334)"><rect width="3" height="71" fill="url(#chV)"/></g>
<g transform="translate(311,334)"><rect x="0" width="36" height="3" fill="url(#chH)"/></g>
<g transform="translate(244,490)"><rect x="0" width="8" height="3" fill="url(#chH)"/></g>
<g transform="translate(249,410)"><rect width="3" height="83" fill="url(#chV)"/></g>
<g transform="translate(249,410)"><rect x="0" width="16" height="3" fill="url(#chH)"/></g>
<g transform="translate(297,410)"><rect x="0" width="50" height="3" fill="url(#chH)"/></g>
<g transform="translate(428,334)"><rect x="5" width="349" height="3" fill="url(#chH)"/></g>
<g transform="translate(732,299)"><rect width="3" height="38" fill="url(#chV)"/></g>
<g transform="translate(732,299)"><rect x="0" width="157" height="3" fill="url(#chH)"/></g>
<circle cx="733.5" cy="335.5" r="3.2" fill="#3a9cff"/>
<g transform="translate(519,472)"><rect width="6" height="2" fill="url(#tlH)"/></g>
<g transform="translate(525,471)"><rect width="98" height="2" fill="url(#tlH)"/></g>
<rect x="523" y="471" width="3" height="1" fill="#007b7b"/>
<rect x="523" y="473" width="3" height="1" fill="#007b7b"/>
<g transform="translate(655,465)"><rect width="35" height="2" fill="url(#tlH)"/></g>
<g transform="translate(722,473)"><rect width="41" height="2" fill="url(#tlH)"/></g>
<g transform="translate(761,326)"><rect width="2" height="7" fill="url(#tlVL)"/></g>
<g transform="translate(761,338)"><rect width="2" height="4" fill="url(#tlVL)"/></g>
<g transform="translate(761,347)"><rect width="2" height="128" fill="url(#tlVL)"/></g>
<g transform="translate(761,326)"><rect width="21" height="2" fill="url(#tlH)"/></g>
<g transform="translate(667,481)"><rect width="23" height="2" fill="url(#pkH)"/></g>
<g transform="translate(667,481)"><rect width="2" height="34" fill="url(#pkVL)"/></g>
<g transform="translate(433,357)"><rect width="23" height="2" fill="url(#blH)"/></g>
<g transform="translate(433,433)"><rect width="7" height="2" fill="url(#blH)"/></g>
<g transform="translate(438,433)"><rect width="2" height="29" fill="url(#blVR)"/></g>
<g transform="translate(438,460)"><rect width="6" height="2" fill="url(#blH)"/></g>
<use href="#pathconst" x="58" y="394" width="18" height="18"/>
<use href="#subvi" x="88" y="387" width="32" height="32"/>
<use href="#subviB" x="131" y="387" width="32" height="32"/>
<use href="#pathconst" x="501" y="464" width="18" height="18"/>
<use href="#subvi" x="623" y="456" width="32" height="32"/>
<use href="#subviB" x="690" y="458" width="32" height="32"/>
<use href="#imread" x="174" y="399" width="32" height="32"/>
<use href="#cvtcolor" x="265" y="399" width="32" height="32"/>
<use href="#createmat" x="212" y="487" width="32" height="32"/>
<use href="#imwrite" x="782" y="323" width="32" height="32"/>
<use href="#errh" x="889" y="296" width="32" height="32"/>
<use href="#propnode" x="347" y="331" width="86" height="38"/>
<use href="#propnode" x="347" y="407" width="86" height="38"/>
<use href="#picind" x="456" y="350" width="32" height="16"/>
<use href="#picind" x="444" y="453" width="32" height="16"/>
<path d="M889,297 L892.5,300.5 L889,304 Z" fill="#ff0000"/>
<rect x="76" y="352" width="129" height="19" fill="#fff" stroke="#0000ff" stroke-width="2"/>
<path d="M75,351 H84 L75,360 Z" fill="#444"/>
<path d="M78,361h1v1h-1zM79,360h1v3h-1zM80,359h1v5h-1zM82,359h1v5h-1zM83,360h1v3h-1zM84,361h1v1h-1z" fill="#0000ff"/>
<path d="M196,359 H203 L199.5,363 Z" fill="#0000ff"/>
<text x="87.5" y="366.2" font-size="12.5" fill="#000" textLength="102.5" lengthAdjust="spacingAndGlyphs">COLOR_BGR2RGB</text>
<rect x="73" y="435" width="46" height="19" fill="#fff" stroke="#ff00ff" stroke-width="2"/>
<rect x="72" y="434" width="4" height="20" fill="#ff00ff"/>
<text x="77" y="449" font-size="12.5" fill="#000" textLength="37.5" lengthAdjust="spacingAndGlyphs">cat.jpg</text>
<rect x="625" y="516" width="50" height="19" fill="#fff" stroke="#ff00ff" stroke-width="2"/>
<rect x="624" y="515" width="4" height="21" fill="#ff00ff"/>
<text x="629.5" y="530" font-size="12.5" fill="#000" textLength="42" lengthAdjust="spacingAndGlyphs">cat.png</text>
<path d="M245,521.5 H246.5 V541.5 H213.5 V540" fill="none" stroke="#0000ff" stroke-width="1"/>
<rect x="211.5" y="519.5" width="33" height="20" fill="#fff" stroke="#0000ff" stroke-width="1"/>
<text x="214" y="534.3" font-size="12.5" fill="#000" textLength="15" lengthAdjust="spacingAndGlyphs">8U</text>
<path d="M235,527 H242 L238.5,531 Z" fill="#0000ff"/>
<g font-size="12.5" fill="#000">
<text x="213" y="482" textLength="78" lengthAdjust="spacingAndGlyphs">Create_Mat.vi</text>
<text x="783" y="318" textLength="54" lengthAdjust="spacingAndGlyphs">imwrite.vi</text>
<text x="457.5" y="345.4" textLength="40" lengthAdjust="spacingAndGlyphs">src out</text>
<text x="445.5" y="448" textLength="41" lengthAdjust="spacingAndGlyphs">dst out</text>
</g>
<line x1="122" y1="514" x2="173.21" y2="439.02" stroke="#000" stroke-width="2.2"/>
<path d="M178,432 L174.77,443.11 L173.21,439.02 L168.82,439.05 Z" fill="#000"/>
<line x1="403" y1="516" x2="444.86" y2="475.88" stroke="#000" stroke-width="2.2"/>
<path d="M451,470 L445.55,480.21 L444.86,475.88 L440.57,475.01 Z" fill="#000"/>
<line x1="801" y1="511" x2="798.64" y2="364.50" stroke="#000" stroke-width="2.2"/>
<path d="M798.5,356 L802.28,366.94 L798.64,364.50 L795.08,367.06 Z" fill="#000"/>
<rect x="42.5" y="514.5" width="145" height="18" fill="#ffffe1" stroke="#000"/>
<text x="45" y="528" font-size="12" fill="#000" textLength="141" lengthAdjust="spacingAndGlyphs">Read an image from file</text>
<rect x="341.5" y="516.5" width="104" height="18" fill="#ffffe1" stroke="#000"/>
<text x="344" y="530" font-size="12" fill="#000" textLength="99" lengthAdjust="spacingAndGlyphs">Display an image</text>
<rect x="731.5" y="511.5" width="141" height="18" fill="#ffffe1" stroke="#000"/>
<text x="734" y="525" font-size="12" fill="#000" textLength="136" lengthAdjust="spacingAndGlyphs">Write an image to a file</text>
</svg>
</body></html>
